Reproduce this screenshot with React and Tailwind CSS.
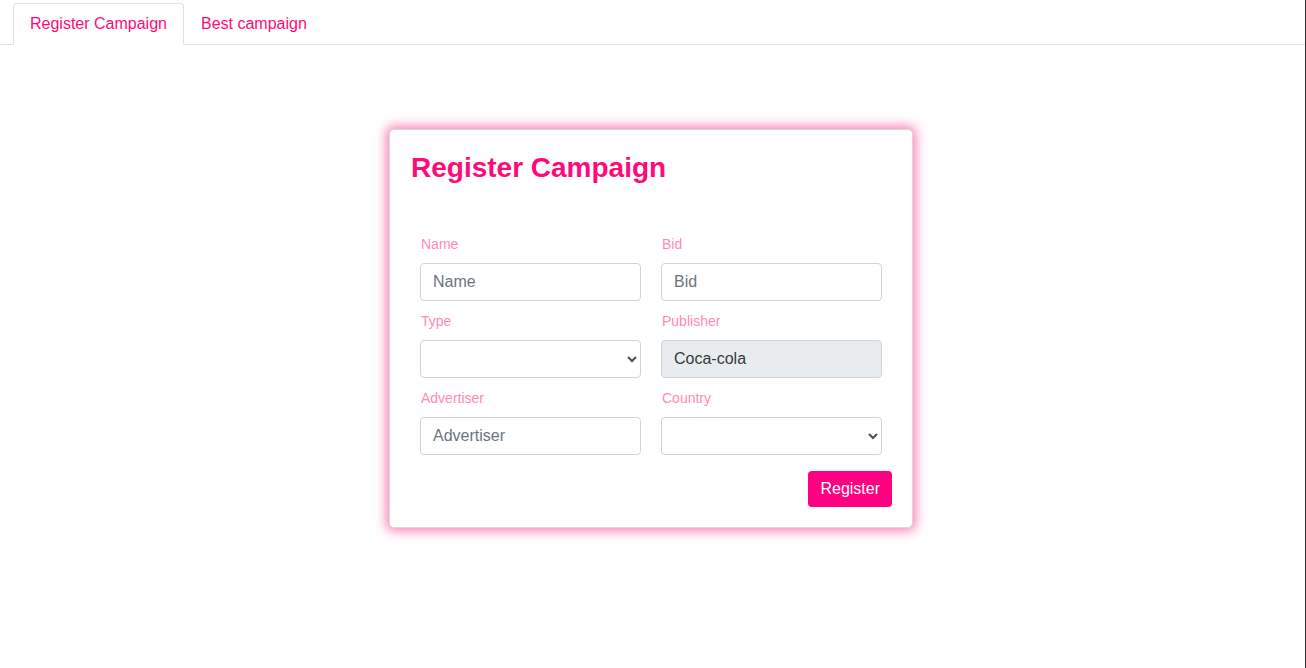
import React from "react";

const labelCls = "block text-[14px] leading-[21px] text-[#ff8ab6] mb-2 pl-px";
const baseInput =
  "block w-full h-[38px] border border-[#ced4da] rounded-[4px] px-3 text-[16px] placeholder:text-[#6c757d] outline-none";
const inputCls = baseInput + " bg-white text-[#495057]";

function Field({ label, children }) {
  return (
    <div className="px-[10px] mb-[10px]">
      <label className={labelCls}>{label}</label>
      {children}
    </div>
  );
}

export default function App() {
  return (
    <div className="min-h-[668px] bg-white font-['Liberation_Sans',Arial,sans-serif] text-[16px] text-[#212529]">
      <div className="pt-[3px]">
        <div className="flex border-b border-[#dee2e6] pl-[13px] mr-[1px]">
          <div className="-mb-px border border-[#dee2e6] border-b-white rounded-t-[4px] bg-white px-4 py-2 leading-6 text-[#ff0a7a]">
            Register Campaign
          </div>
          <div className="-mb-px border border-transparent px-4 py-2 leading-6 text-[#ff0a7a]">
            Best campaign
          </div>
        </div>
      </div>

      <div className="flex justify-center pt-[84px] pr-[4px]">
        <div className="w-[524px] bg-white border border-[#d9d9d9] rounded-[5px] shadow-[0_0_11px_3px_rgba(255,95,160,0.8)] p-5">
          <h3 className="text-[28px] leading-[34px] font-bold text-[#ff0a7a] mb-[49px] mt-px pl-px">
            Register Campaign
          </h3>
          <div className="grid grid-cols-2">
            <Field label="Name">
              <input className={inputCls} placeholder="Name" />
            </Field>
            <Field label="Bid">
              <input className={inputCls} placeholder="Bid" />
            </Field>
            <Field label="Type">
              <select className={inputCls + " pl-2 pr-1"}>
                <option></option>
              </select>
            </Field>
            <Field label="Publisher">
              <input
                className={baseInput + " bg-[#e9ecef] text-[#343a40]"}
                value="Coca-cola"
                disabled
                readOnly
              />
            </Field>
            <Field label="Advertiser">
              <input className={inputCls} placeholder="Advertiser" />
            </Field>
            <Field label="Country">
              <select className={inputCls + " pl-2 pr-1"}>
                <option></option>
              </select>
            </Field>
          </div>
          <div className="flex justify-end mt-[6px]">
            <button className="h-[36px] px-3 rounded-[4px] bg-[#ff0080] text-white text-[16px] leading-6">
              Register
            </button>
          </div>
        </div>
      </div>
      <div className="fixed right-0 top-0 h-full w-px bg-[#2b2b2b]" />
    </div>
  );
}
